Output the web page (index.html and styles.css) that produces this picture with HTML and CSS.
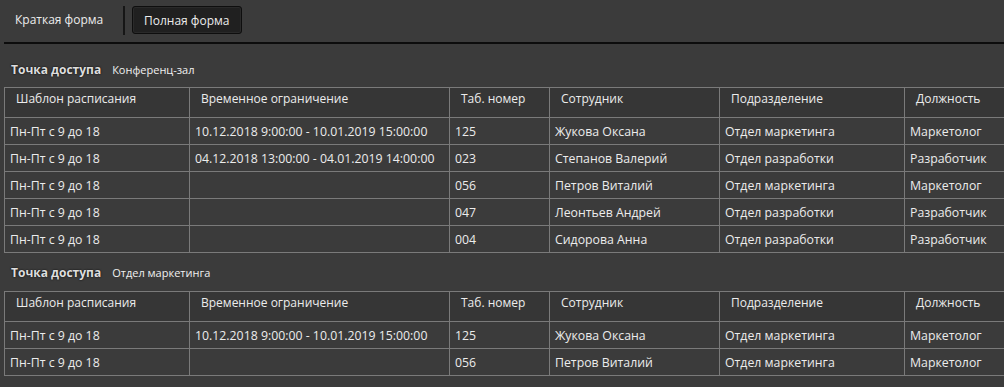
FILE: index.html
```html
<!DOCTYPE html>
<html lang="ru">
<head>
<meta charset="utf-8">
<link rel="stylesheet" href="styles.css">
</head>
<body>
<div class="page">
  <div class="tabs">
    <div class="tab">Краткая форма</div>
    <div class="sep"></div>
    <div class="tab active">Полная форма</div>
  </div>
  <div class="rule"></div>

  <div class="section-title"><span class="label">Точка доступа</span><span class="value">Конференц-зал</span></div>
  <table class="grid">
    <colgroup><col class="c1"><col class="c2"><col class="c3"><col class="c4"><col class="c5"><col class="c6"></colgroup>
    <thead>
      <tr><th>Шаблон расписания</th><th>Временное ограничение</th><th>Таб. номер</th><th>Сотрудник</th><th>Подразделение</th><th>Должность</th></tr>
    </thead>
    <tbody>
      <tr><td>Пн-Пт с 9 до 18</td><td>10.12.2018 9:00:00 - 10.01.2019 15:00:00</td><td>125</td><td>Жукова Оксана</td><td>Отдел маркетинга</td><td>Маркетолог</td></tr>
      <tr><td>Пн-Пт с 9 до 18</td><td>04.12.2018 13:00:00 - 04.01.2019 14:00:00</td><td>023</td><td>Степанов Валерий</td><td>Отдел разработки</td><td>Разработчик</td></tr>
      <tr><td>Пн-Пт с 9 до 18</td><td></td><td>056</td><td>Петров Виталий</td><td>Отдел маркетинга</td><td>Маркетолог</td></tr>
      <tr><td>Пн-Пт с 9 до 18</td><td></td><td>047</td><td>Леонтьев Андрей</td><td>Отдел разработки</td><td>Разработчик</td></tr>
      <tr><td>Пн-Пт с 9 до 18</td><td></td><td>004</td><td>Сидорова Анна</td><td>Отдел разработки</td><td>Разработчик</td></tr>
    </tbody>
  </table>

  <div class="section-title second"><span class="label">Точка доступа</span><span class="value">Отдел маркетинга</span></div>
  <table class="grid">
    <colgroup><col class="c1"><col class="c2"><col class="c3"><col class="c4"><col class="c5"><col class="c6"></colgroup>
    <thead>
      <tr><th>Шаблон расписания</th><th>Временное ограничение</th><th>Таб. номер</th><th>Сотрудник</th><th>Подразделение</th><th>Должность</th></tr>
    </thead>
    <tbody>
      <tr><td>Пн-Пт с 9 до 18</td><td>10.12.2018 9:00:00 - 10.01.2019 15:00:00</td><td>125</td><td>Жукова Оксана</td><td>Отдел маркетинга</td><td>Маркетолог</td></tr>
      <tr><td>Пн-Пт с 9 до 18</td><td></td><td>056</td><td>Петров Виталий</td><td>Отдел маркетинга</td><td>Маркетолог</td></tr>
    </tbody>
  </table>
</div>
</body>
</html>
```

FILE: styles.css
```css
html, body {
  margin: 0;
  padding: 0;
  background: #3b3b3b;
  overflow: hidden;
}
.page {
  width: 1004px;
  height: 387px;
  overflow: hidden;
  font-family: "Open Sans", "Noto Sans", sans-serif;
  font-size: 12px;
  color: #ececec;
}
.tabs {
  display: flex;
  align-items: flex-start;
  height: 42px;
  padding-top: 6px;
  box-sizing: border-box;
}
.tab {
  height: 28px;
  line-height: 28px;
  box-sizing: border-box;
  font-size: 12px;
}
.tabs .tab:first-child {
  padding-left: 15px;
  width: 123px;
}
.sep {
  width: 2px;
  height: 29px;
  background: #161616;
  margin-right: 7px;
}
.tab.active {
  width: 110px;
  padding-left: 11px;
  line-height: 27px;
  background: #202020;
  border: 1px solid #0e0e0e;
  border-radius: 3px;
  box-shadow: inset 0 0 0 1px #2a2a2a;
}
.rule {
  margin-left: 4px;
  height: 2px;
  background: #0c0c0c;
}
.section-title {
  display: flex;
  align-items: baseline;
  gap: 11px;
  padding-left: 11px;
  height: 43px;
  padding-top: 17px;
  box-sizing: border-box;
}
.section-title.second {
  height: 38px;
  padding-top: 11px;
}
.label {
  font-weight: bold;
  font-size: 12px;
  color: #dedede;
  text-shadow: 0 0 2px #000;
}
.value {
  font-size: 11px;
  color: #f0f0f0;
}
.grid {
  margin-left: 4px;
  border-collapse: collapse;
  table-layout: fixed;
  width: 1100px;
}
.c1 { width: 185px; }
.c2 { width: 260px; }
.c3 { width: 100px; }
.c4 { width: 170px; }
.c5 { width: 185px; }
.c6 { width: 200px; }
.grid th, .grid td {
  border: 1px solid #7a7a7a;
  white-space: nowrap;
  overflow: hidden;
  text-align: left;
  font-weight: normal;
}
.grid th {
  height: 30px;
  box-sizing: border-box;
  vertical-align: top;
  padding: 2px 0 0 11px;
  background: #363636;
}
.grid td {
  height: 27px;
  box-sizing: border-box;
  padding: 0 0 0 5px;
  vertical-align: middle;
  font-size: 12.3px;
}
```
